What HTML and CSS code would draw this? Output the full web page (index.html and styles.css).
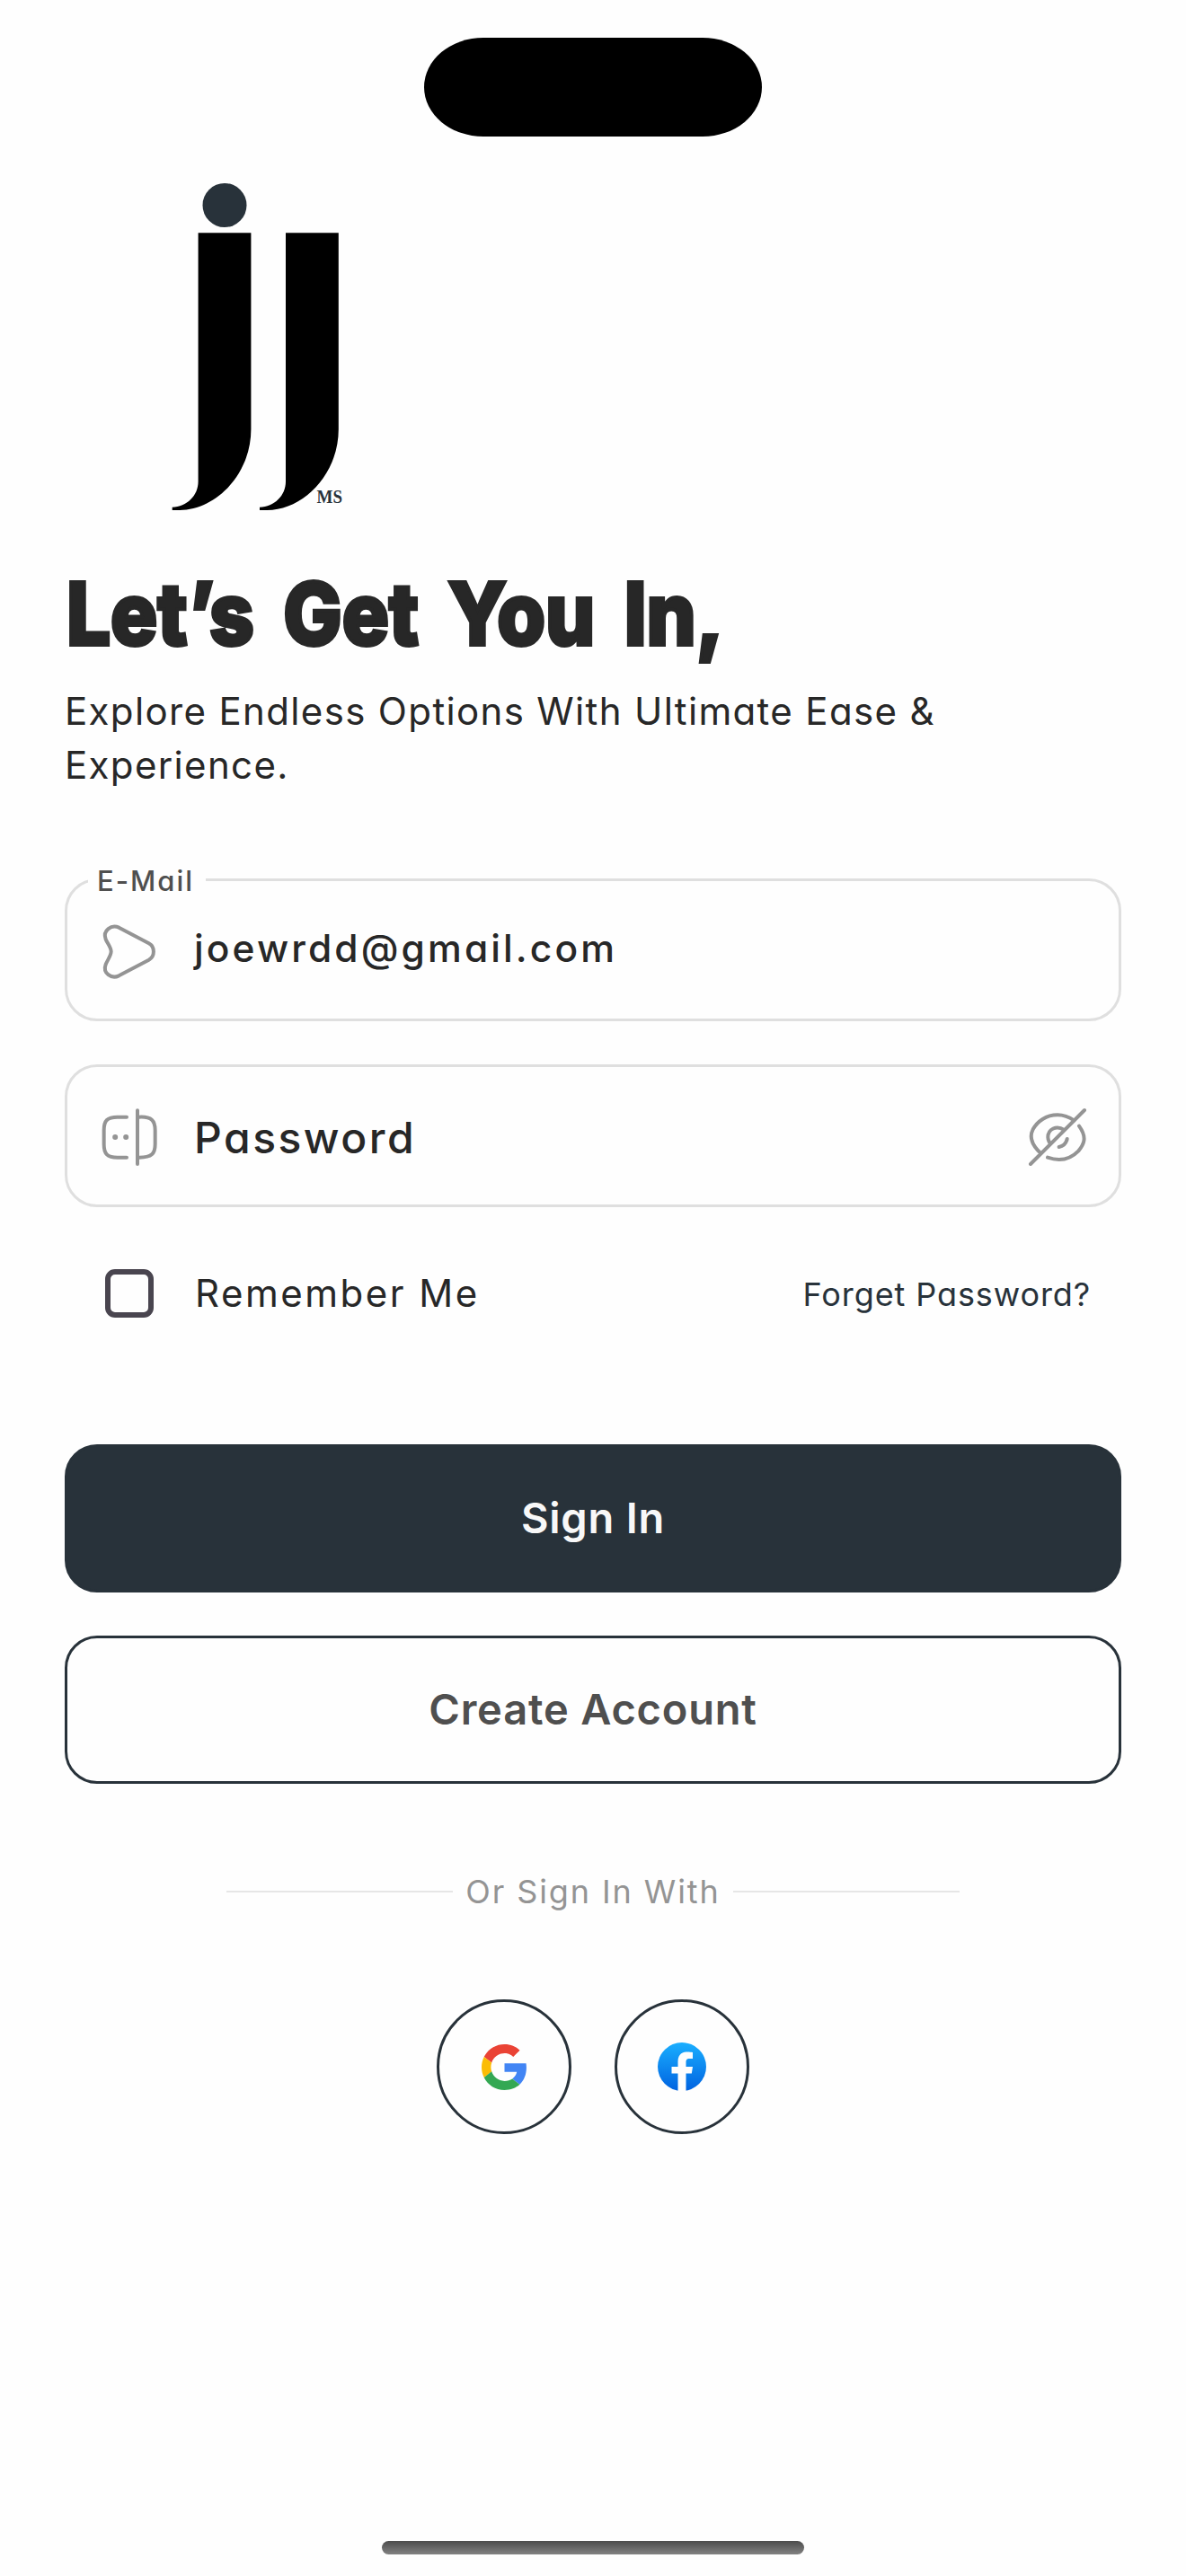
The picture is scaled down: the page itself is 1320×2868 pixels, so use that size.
FILE: index.html
```html
<!DOCTYPE html>
<html lang="en">
<head>
<meta charset="utf-8">
<title>Sign In</title>
<link rel="stylesheet" href="styles.css">
</head>
<body>
<main class="screen">
  <div class="island"></div>
  <svg class="logo" viewBox="0 0 220 370" aria-label="JJ MS">
    <circle cx="60" cy="28.5" r="24.5" fill="#28323a"/>
    <path d="M30.6 59.3H89.4V278C89.4 328 50 368 10 368H1.7V364.7C18 364 30.6 352 30.6 336Z"/>
    <path d="M128 59.3H186.8V278C186.8 328 147.4 368 107.4 368H99V364.7C115.4 364 128 352 128 336Z"/>
    <text class="logo-mark" x="162.500" y="360" textLength="28.500" lengthAdjust="spacingAndGlyphs">MS</text>
  </svg>
  <h1 class="title">Let’s Get You In,</h1>
  <p class="subtitle">Explore Endless Options With Ultimate Ease &amp;<br>Experience.</p>

  <form class="form">
    <div class="field">
      <label class="field-label">E-Mail</label>
      <svg class="icon" viewBox="33 48 198 198"><path d="M97 68L197 121C218 133 218 164 197 176L97 229C72 241 42 220 53 191C58 178 71 162 71 148C71 134 58 120 53 107C42 78 72 57 97 68Z"/></svg>
      <span class="value email">joewrdd@gmail.com</span>
    </div>
    <div class="field">
      <svg class="icon" viewBox="33 670 198 198"><path d="M123 702H92C58 702 47 714 47 746V793C47 825 58 837 92 837H123M165 702C206 700 218 714 218 746V793C218 825 206 837 165 837M159 680V859"/><circle class="dot" cx="84.500" cy="769" r="9"/><circle class="dot" cx="120.500" cy="769" r="9"/></svg>
      <span class="value password">Password</span>
      <svg class="icon eye" viewBox="849 190 198 198"><path d="M858 379L1038 199M1004 234C985 221 966 215 948 215C910 215 881 236 866 263C852 290 865 318 892 343M1020 252C1045 287 1040 309 1018 335C990 364 955 371 915 357M970 265C945 248 916 262 916 290C916 300 919 305 925 312M980 295C977 310 968 319 953 322"/></svg>
    </div>
    <div class="options">
      <span class="checkbox"></span>
      <span class="remember">Remember Me</span>
      <a class="forget">Forget Password?</a>
    </div>
    <button class="btn primary" type="button">Sign In</button>
    <button class="btn outline" type="button">Create Account</button>
  </form>

  <div class="divider"><i></i><span>Or Sign In With</span><i></i></div>
  <div class="social">
    <a class="round"><svg class="google" viewBox="0 0 48 48"><path fill="#ea4335" d="M24 9.500c3.540 0 6.710 1.220 9.210 3.600l6.850-6.850C35.900 2.380 30.470 0 24 0 14.620 0 6.510 5.380 2.560 13.220l7.980 6.190C12.430 13.720 17.740 9.500 24 9.500z"/><path fill="#4285f4" d="M46.980 24.550c0-1.570-.15-3.090-.38-4.550H24v9.020h12.940c-.58 2.960-2.260 5.480-4.780 7.180l7.730 6c4.510-4.180 7.090-10.360 7.090-17.650z"/><path fill="#fbbc05" d="M10.530 28.590c-.48-1.450-.76-2.990-.76-4.590s.27-3.140.76-4.590l-7.980-6.190C.92 16.460 0 20.120 0 24c0 3.880.92 7.540 2.560 10.780l7.970-6.190z"/><path fill="#34a853" d="M24 48c6.480 0 11.930-2.130 15.890-5.810l-7.730-6c-2.150 1.450-4.920 2.300-8.160 2.300-6.260 0-11.570-4.220-13.470-9.910l-7.980 6.190C6.510 42.620 14.620 48 24 48z"/></svg></a>
    <a class="round"><svg class="facebook" viewBox="0 0 54 54"><defs><linearGradient id="fb" x1="0" y1="0" x2="0" y2="1"><stop offset="0" stop-color="#1aafff"/><stop offset="1" stop-color="#0062e0"/></linearGradient></defs><circle cx="27" cy="27" r="27" fill="url(#fb)"/><path fill="#fefefe" d="M22.500 55V34.500H15.500V27H22.500V21C22.500 14 26.500 10.500 33 10.500C35.500 10.500 37.500 10.700 39 11V18H35.500C32.300 18 31.500 19.500 31.500 22V27H39L37.800 34.500H31.500V55Z"/></svg></a>
  </div>
  <div class="home"></div>
</main>
</body>
</html>
```
FILE: styles.css
```css
* { box-sizing: border-box; }
body { margin: 0; background: #fefefe; color: #272727; font-family: Inter, "Noto Sans", sans-serif; font-feature-settings: "cv11"; }
.screen { display: flex; flex-direction: column; width: 1320px; height: 2868px; padding: 42px 72px 24px; overflow: hidden; }
.island { flex: none; align-self: center; width: 376px; height: 110px; border-radius: 66px / 55px; background: #000; }
.logo { flex: none; width: 220px; height: 370px; margin: 48px 0 0 118px; }
.logo-mark { font: bold 21px "Liberation Serif", serif; fill: #28323a; }
.title { margin: 63px 0 0 2px; font-size: 96px; line-height: 100px; font-weight: 800; word-spacing: 15px; white-space: nowrap; -webkit-text-stroke: 4px #272727; stroke-linejoin: round; transform: scaleX(.905); transform-origin: left; }
.subtitle { margin: 29px 0 0; font-size: 42px; line-height: 60px; font-weight: 400; letter-spacing: 1.35px; white-space: nowrap; }
.form { display: flex; flex-direction: column; margin-top: 96px; }
.field { position: relative; display: flex; align-items: center; height: 159px; margin-bottom: 48px; padding: 3px 35px 0 36px; border: 3px solid #dfdfdf; border-radius: 36px; }
.field-label { position: absolute; left: 23px; top: -20px; width: 131px; padding-left: 10px; background: #fefefe; font-size: 31px; font-weight: 500; line-height: 40px; letter-spacing: 2px; color: #4f4f4f; white-space: nowrap; }
.icon { width: 66px; height: 66px; fill: none; stroke: #949494; stroke-width: 12; stroke-linecap: round; stroke-linejoin: round; }
.dot { fill: #949494; stroke: none; }
.value { flex: 1; margin-left: 39px; font-weight: 500; white-space: nowrap; }
.email { margin-bottom: 7px; font-size: 42.5px; letter-spacing: 3.1px; }
.password { font-size: 48px; letter-spacing: 2.5px; }
.options { display: flex; align-items: center; height: 54px; margin: 21px 36px 0 45px; white-space: nowrap; }
.checkbox { width: 54px; height: 54px; border: 6px solid #49454f; border-radius: 11px; }
.remember { margin: -2px 0 0 46px; font-size: 42px; font-weight: 400; letter-spacing: 2.5px; }
.forget { margin: 2px -2px 0 auto; font-size: 36px; font-weight: 400; letter-spacing: .9px; color: #28323a; }
.btn { height: 165px; padding: 0 0 2px; border: 3px solid #28323a; border-radius: 36px; font: 600 47px/58px Inter, sans-serif; letter-spacing: .8px; }
.primary { margin-top: 141px; background: #28323a; color: #f8f8f8; }
.outline { margin-top: 48px; background: #fefefe; color: #4f4f4f; }
.divider { display: flex; align-items: center; justify-content: space-between; width: 816px; height: 60px; margin: 90px auto 0; color: #949494; font-size: 36px; font-weight: 400; letter-spacing: 1.9px; white-space: nowrap; }
.divider i { width: 252px; height: 2px; background: #e6e6e6; }
.social { display: flex; justify-content: center; gap: 48px; margin-top: 90px; }
.round { display: flex; align-items: center; justify-content: center; width: 150px; height: 150px; border: 3px solid #28323a; border-radius: 50%; }
.google { width: 51px; height: 51px; }
.facebook { width: 54px; height: 54px; }
.home { flex: none; align-self: center; width: 470px; height: 15px; margin-top: auto; border-radius: 8px; background: linear-gradient(#4c4c4c, #828282); }
```
